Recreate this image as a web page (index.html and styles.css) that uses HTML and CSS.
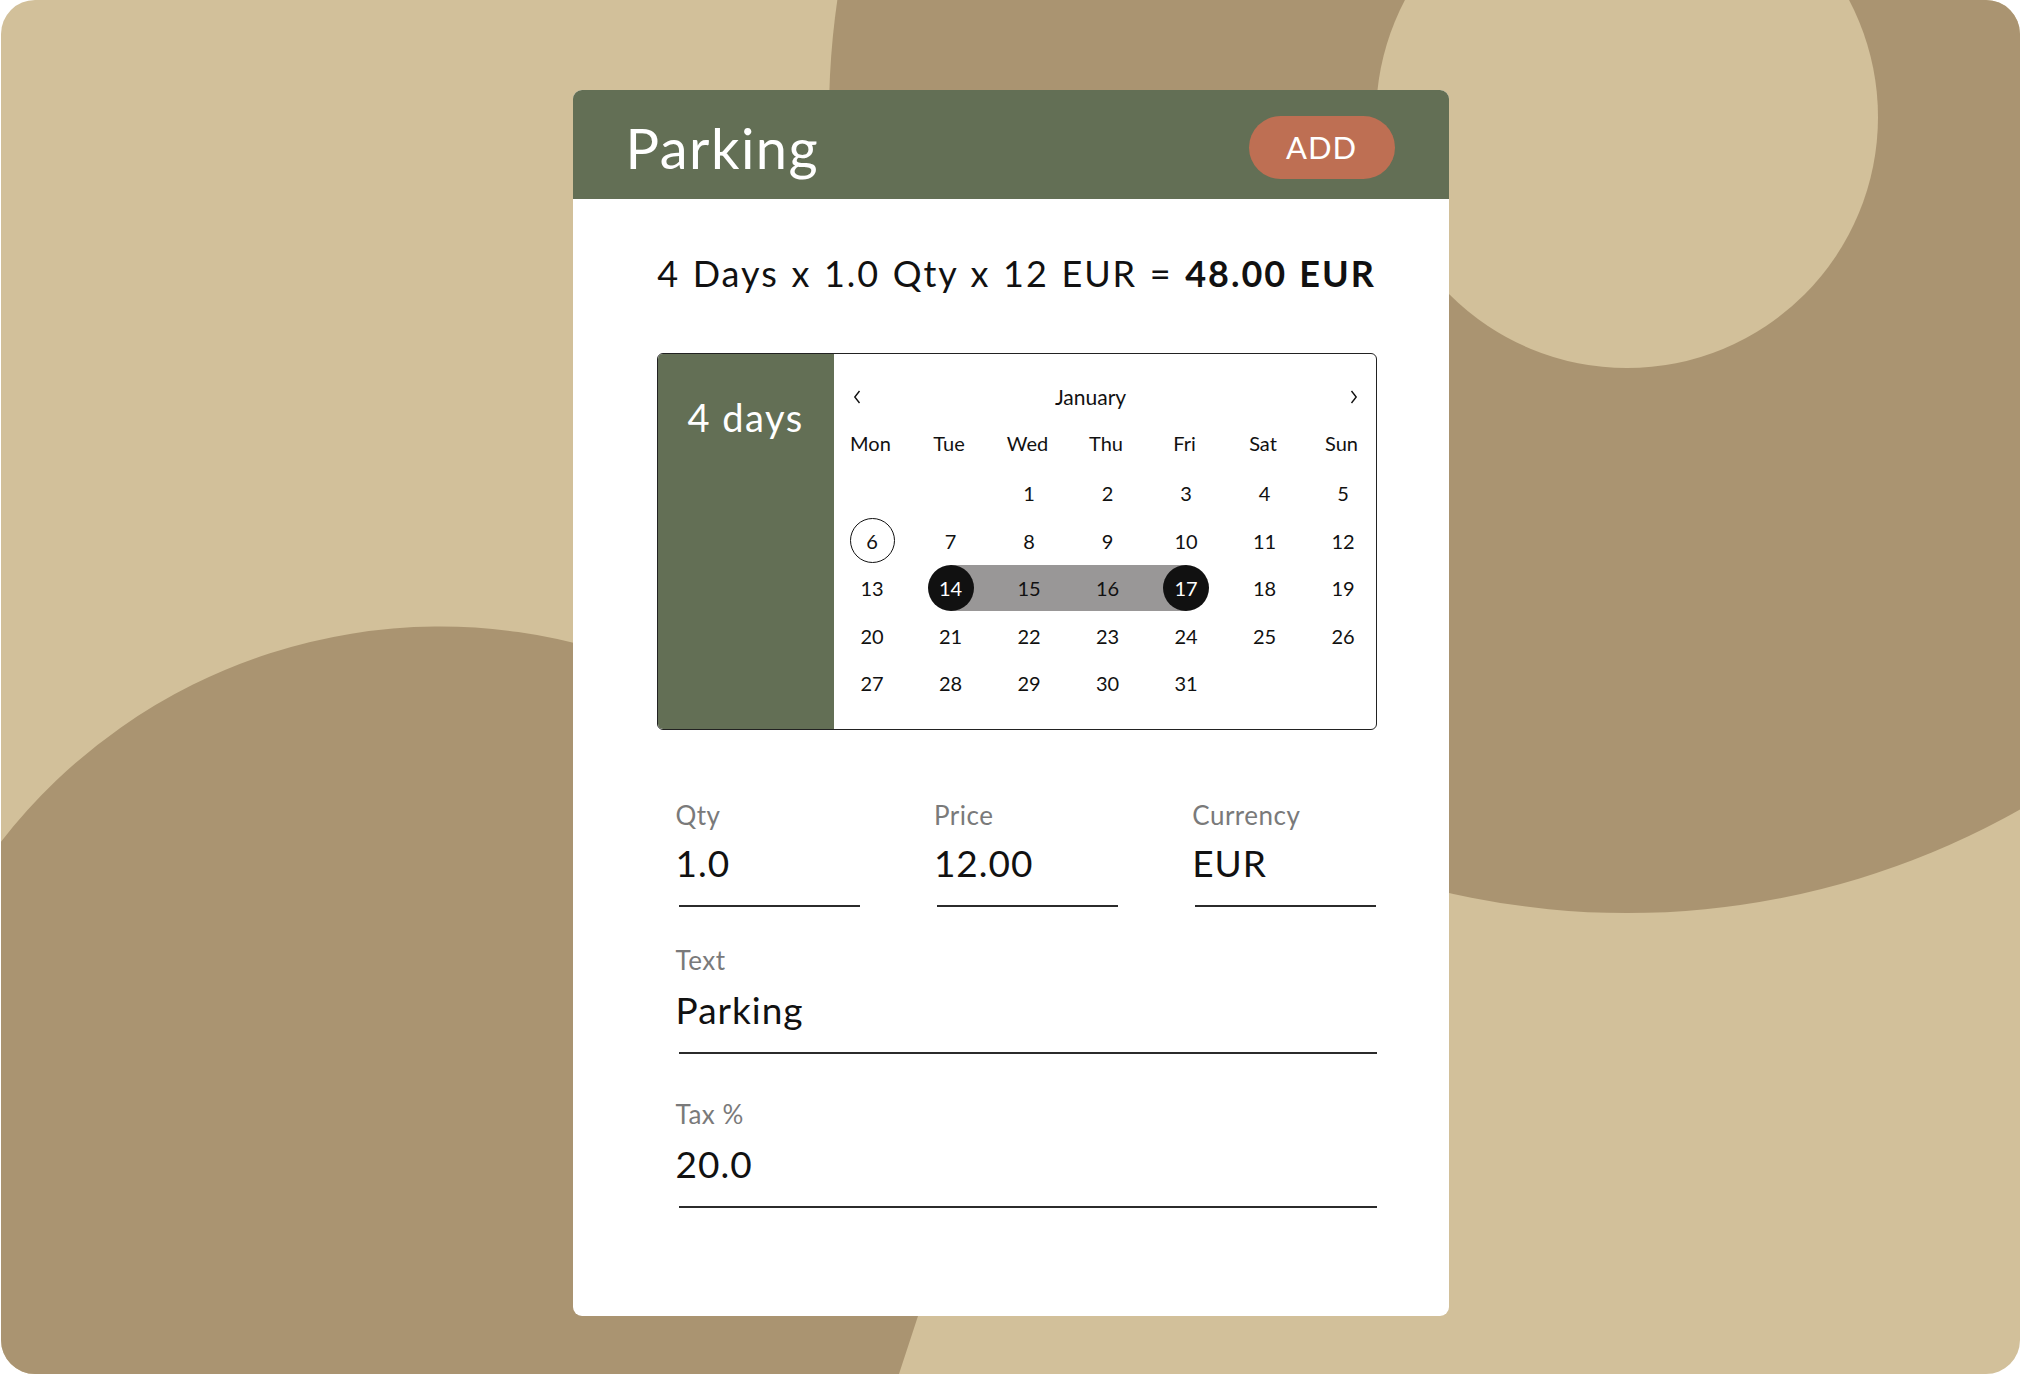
FILE: index.html
```html
<!DOCTYPE html>
<html lang="en">
<head>
<meta charset="utf-8">
<title>Parking</title>
<link rel="stylesheet" href="styles.css">
</head>
<body>
<div class="stage">
  <svg class="bg" viewBox="1 0 2019 1374" aria-hidden="true">
    <circle cx="1627" cy="115" r="798" fill="#AA9471"/>
    <circle cx="1627" cy="117" r="251" fill="#D2C09A"/>
    <path d="M0 843 A556 556 0 0 1 600 650 L1000 720 L1010 1100 L940 1260 L918 1316 L897 1380 L0 1380 Z" fill="#AA9471"/>
  </svg>
  <div class="card">
    <header class="card-head">
      <h1 class="title">Parking</h1>
      <button class="add-btn" type="button">ADD</button>
    </header>
    <div class="card-body">
      <p class="summary">4 Days x 1.0 Qty x 12 EUR = <b>48.00 EUR</b></p>
      <div class="picker">
        <div class="picker-side">4 days</div>
        <div class="cal">
          <div class="cal-head">
            <svg class="chev" width="8" height="14" viewBox="0 0 8 14"><path d="M6.5 1 L1.8 7 L6.5 13" fill="none" stroke="#111" stroke-width="1.4"/></svg>
            <span class="month">January</span>
            <svg class="chev" width="8" height="14" viewBox="0 0 8 14"><path d="M1.5 1 L6.2 7 L1.5 13" fill="none" stroke="#111" stroke-width="1.4"/></svg>
          </div>
          <div class="cal-grid">
            <span class="dow">Mon</span><span class="dow">Tue</span><span class="dow">Wed</span><span class="dow">Thu</span><span class="dow">Fri</span><span class="dow">Sat</span><span class="dow">Sun</span>
            <span class="day"></span><span class="day"></span>
            <span class="day"><span class="num">1</span></span>
            <span class="day"><span class="num">2</span></span>
            <span class="day"><span class="num">3</span></span>
            <span class="day"><span class="num">4</span></span>
            <span class="day"><span class="num">5</span></span>
            <span class="day today"><span class="num">6</span></span>
            <span class="day"><span class="num">7</span></span>
            <span class="day"><span class="num">8</span></span>
            <span class="day"><span class="num">9</span></span>
            <span class="day"><span class="num">10</span></span>
            <span class="day"><span class="num">11</span></span>
            <span class="day"><span class="num">12</span></span>
            <span class="day"><span class="num">13</span></span>
            <span class="day sel start"><span class="num">14</span></span>
            <span class="day mid"><span class="num">15</span></span>
            <span class="day mid"><span class="num">16</span></span>
            <span class="day sel end"><span class="num">17</span></span>
            <span class="day"><span class="num">18</span></span>
            <span class="day"><span class="num">19</span></span>
            <span class="day"><span class="num">20</span></span>
            <span class="day"><span class="num">21</span></span>
            <span class="day"><span class="num">22</span></span>
            <span class="day"><span class="num">23</span></span>
            <span class="day"><span class="num">24</span></span>
            <span class="day"><span class="num">25</span></span>
            <span class="day"><span class="num">26</span></span>
            <span class="day"><span class="num">27</span></span>
            <span class="day"><span class="num">28</span></span>
            <span class="day"><span class="num">29</span></span>
            <span class="day"><span class="num">30</span></span>
            <span class="day"><span class="num">31</span></span>
          </div>
        </div>
      </div>
      <div class="fields">
        <div class="row3">
          <div class="field">
            <div class="label">Qty</div>
            <div class="value">1.0</div>
            <div class="line"></div>
          </div>
          <div class="field">
            <div class="label">Price</div>
            <div class="value">12.00</div>
            <div class="line"></div>
          </div>
          <div class="field">
            <div class="label">Currency</div>
            <div class="value">EUR</div>
            <div class="line"></div>
          </div>
        </div>
        <div class="field field-text">
          <div class="label">Text</div>
          <div class="value">Parking</div>
          <div class="line"></div>
        </div>
        <div class="field field-tax">
          <div class="label">Tax %</div>
          <div class="value">20.0</div>
          <div class="line"></div>
        </div>
      </div>
    </div>
  </div>
</div>
</body>
</html>
```
FILE: styles.css
```css
body {
  margin: 0;
  background: #fff;
  font-family: Lato, "Noto Sans", sans-serif;
  color: #111;
}
.stage {
  position: relative;
  width: 2019px;
  height: 1374px;
  margin-left: 1px;
  border-radius: 34px;
  overflow: hidden;
  background: #D2C09A;
  padding-top: 90px;
  box-sizing: border-box;
}
.bg {
  position: absolute;
  left: 0;
  top: 0;
  width: 2019px;
  height: 1374px;
}
.card {
  position: relative;
  width: 876px;
  height: 1226px;
  margin: 0 auto;
  background: #fff;
  border-radius: 9px;
  overflow: hidden;
}
.card-head {
  height: 109px;
  box-sizing: border-box;
  padding: 6px 54px 0 53px;
  background: #636F55;
  display: flex;
  align-items: center;
  justify-content: space-between;
}
.title {
  margin: 0;
  font-size: 56px;
  font-weight: 400;
  line-height: 67px;
  letter-spacing: 1.5px;
  color: #fff;
}
.add-btn {
  width: 146px;
  height: 63px;
  padding: 0;
  border: 0;
  border-radius: 32px;
  background: #BE6F53;
  color: #fff;
  font-family: Lato, "Noto Sans", sans-serif;
  font-size: 31px;
  line-height: 1;
  letter-spacing: 1px;
}
.card-body {
  padding: 52px 72px 0 84px;
}
.summary {
  margin: 0;
  font-size: 36px;
  line-height: 44px;
  letter-spacing: 1.95px;
  word-spacing: 1.5px;
  text-align: center;
  color: #111;
}
.summary b {
  font-weight: 700;
}
.picker {
  margin-top: 58px;
  height: 377px;
  box-sizing: border-box;
  border: 1px solid #222;
  border-radius: 6px;
  display: flex;
  overflow: hidden;
}
.picker-side {
  width: 176px;
  flex: none;
  box-sizing: border-box;
  padding-top: 40px;
  background: #636F55;
  color: #fff;
  font-size: 38px;
  line-height: 46px;
  letter-spacing: 1.5px;
  text-align: center;
}
.cal {
  flex: 1;
  min-width: 0;
  padding-top: 28px;
}
.cal-head {
  height: 30px;
  display: flex;
  align-items: center;
  padding: 0 18px 0 19px;
}
.chev {
  flex: none;
  display: block;
}
.month {
  flex: 1;
  text-align: center;
  margin-right: 29px;
  font-size: 21px;
  line-height: 30px;
}
.cal-grid {
  margin-top: 9px;
  margin-left: -1px;
  display: grid;
  grid-template-columns: 79px 78px 79px 78px 79px 78px 79px;
  grid-template-rows: 48.5px repeat(5, 47.5px);
  font-size: 20px;
}
.dow {
  align-self: start;
  line-height: 44px;
  text-align: center;
  margin-left: -3px;
}
.day {
  display: flex;
  align-items: center;
  justify-content: center;
}
.num {
  width: 46px;
  height: 46px;
  border-radius: 50%;
  box-sizing: border-box;
  display: flex;
  align-items: center;
  justify-content: center;
  line-height: 1;
}
.today .num {
  width: 45px;
  height: 45px;
  border: 1px solid #111;
}
.sel .num {
  background: #111;
  color: #fff;
}
.start {
  background: linear-gradient(#999797, #999797) right center / 50% 46px no-repeat;
}
.mid {
  background: linear-gradient(#999797, #999797) center / 100% 46px no-repeat;
}
.end {
  background: linear-gradient(#999797, #999797) left center / 50% 46px no-repeat;
}
.fields {
  margin-top: 69px;
  margin-left: 19px;
}
.row3 {
  display: grid;
  grid-template-columns: repeat(3, 184.2px);
  column-gap: 74.2px;
}
.label {
  font-size: 26px;
  line-height: 32px;
  letter-spacing: 0.5px;
  color: #7a7a7a;
}
.value {
  margin-top: 12px;
  font-size: 37px;
  line-height: 44px;
  letter-spacing: 1px;
  color: #111;
}
.row3 .value {
  margin-top: 10px;
}
.line {
  margin-top: 20px;
  margin-left: 3px;
  height: 2px;
  background: #2b2b2b;
}
.field-text {
  margin-top: 37px;
}
.field-tax {
  margin-top: 44px;
}
```
